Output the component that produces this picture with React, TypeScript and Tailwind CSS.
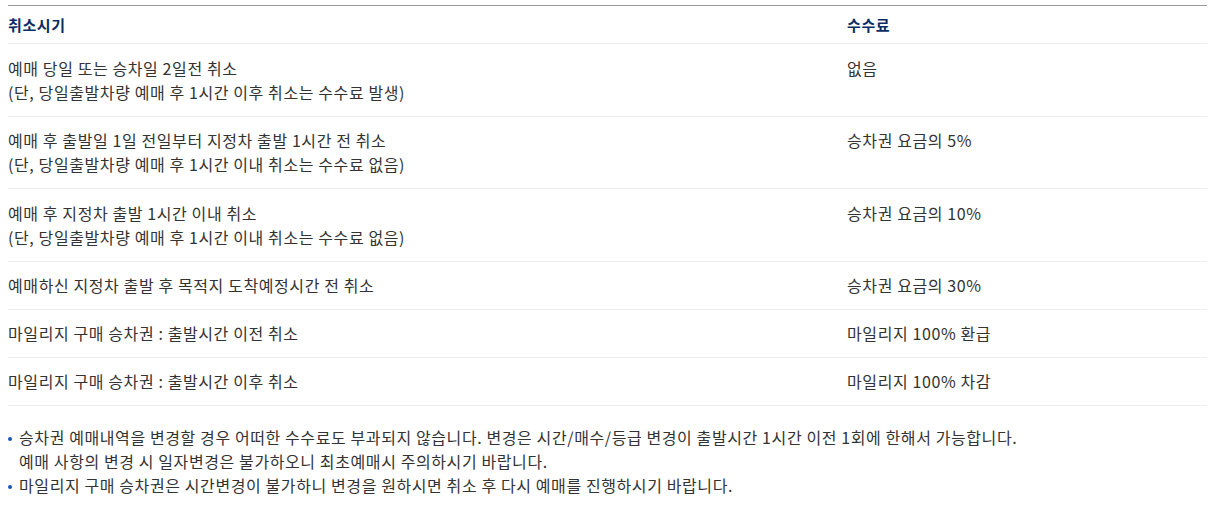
import React from 'react';

const rows: { when: string[]; fee: string }[] = [
  { when: ['예매 당일 또는 승차일 2일전 취소', '(단, 당일출발차량 예매 후 1시간 이후 취소는 수수료 발생)'], fee: '없음' },
  { when: ['예매 후 출발일 1일 전일부터 지정차 출발 1시간 전 취소', '(단, 당일출발차량 예매 후 1시간 이내 취소는 수수료 없음)'], fee: '승차권 요금의 5%' },
  { when: ['예매 후 지정차 출발 1시간 이내 취소', '(단, 당일출발차량 예매 후 1시간 이내 취소는 수수료 없음)'], fee: '승차권 요금의 10%' },
  { when: ['예매하신 지정차 출발 후 목적지 도착예정시간 전 취소'], fee: '승차권 요금의 30%' },
  { when: ['마일리지 구매 승차권 : 출발시간 이전 취소'], fee: '마일리지 100% 환급' },
  { when: ['마일리지 구매 승차권 : 출발시간 이후 취소'], fee: '마일리지 100% 차감' },
];

const notes: string[][] = [
  [
    '승차권 예매내역을 변경할 경우 어떠한 수수료도 부과되지 않습니다. 변경은 시간/매수/등급 변경이 출발시간 1시간 이전 1회에 한해서 가능합니다.',
    '예매 사항의 변경 시 일자변경은 불가하오니 최초예매시 주의하시기 바랍니다.',
  ],
  ['마일리지 구매 승차권은 시간변경이 불가하니 변경을 원하시면 취소 후 다시 예매를 진행하시기 바랍니다.'],
];

export default function App() {
  return (
    <div
      className="bg-white w-[1211px] h-[507px] overflow-hidden text-[16px] leading-[24px] tracking-[0.6px] text-[#333]"
      style={{ fontFamily: '"Noto Sans CJK KR", "Noto Sans", sans-serif' }}
    >
      <div className="ml-2 mr-1 mt-[5px] border-t border-[#9a9a9a]">
        <div className="flex border-b border-[#eeeeee] py-[6.5px] text-[#0b2d63] font-bold text-[15px]">
          <div className="w-[839px]">취소시기</div>
          <div className="flex-1">수수료</div>
        </div>
        {rows.map((r, i) => (
          <div
            key={i}
            className={
              r.when.length > 1
                ? 'flex border-b border-[#eeeeee] py-[11.75px]'
                : 'flex border-b border-[#eeeeee] py-[11.5px]'
            }
          >
            <div className="w-[839px]">
              {r.when.map((l, j) => (
                <div key={j}>{l}</div>
              ))}
            </div>
            <div className="flex-1">{r.fee}</div>
          </div>
        ))}
      </div>
      <ul className="mt-[19px] ml-[8px]">
        {notes.map((n, i) => (
          <li key={i} className="flex">
            <span className="w-[11px] shrink-0 pt-[12px]">
              <span className="block w-[4px] h-[4px] rounded-full bg-[#1a56b4]" />
            </span>
            <div>
              {n.map((l, j) => (
                <div key={j}>{l}</div>
              ))}
            </div>
          </li>
        ))}
      </ul>
    </div>
  );
}
